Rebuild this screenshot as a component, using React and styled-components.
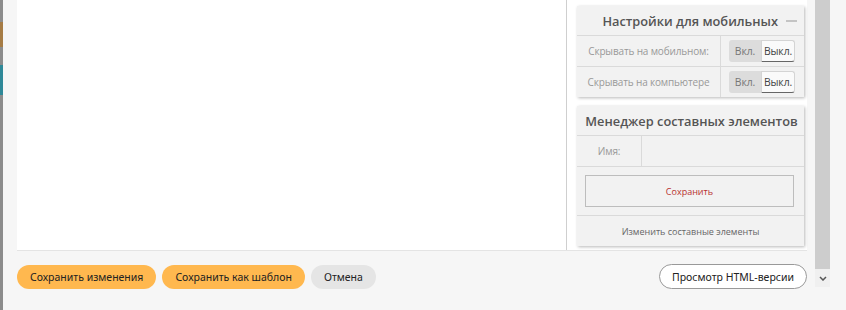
import React from 'react';
import styled, { createGlobalStyle } from 'styled-components';

const Global = createGlobalStyle`
  html, body { margin: 0; padding: 0; background: #f6f6f6; }
  body { font-family: "Open Sans", "Noto Sans", sans-serif; }
`;

const Page = styled.div`
  display: flex;
  width: 846px;
  height: 310px;
  overflow: hidden;
  background: #f6f6f6;
`;

const EdgeStrip = styled.div`
  width: 3px;
  flex: none;
  background: linear-gradient(
    to bottom,
    #8c8c8c 0 22px,
    #a67c45 22px 47px,
    #8c8c8c 47px 65px,
    #2f8898 65px 95px,
    #8c8c8c 95px
  );
`;

const Content = styled.div`
  width: 790px;
  margin-left: 14px;
  margin-right: 8px;
  display: flex;
  flex-direction: column;
`;

const Editor = styled.div`
  height: 250px;
  display: flex;
  background: #fff;
  border-bottom: 1px solid #e4e4e4;
`;

const Canvas = styled.div`
  width: 549px;
  border-right: 1px solid #cfcfcf;
`;

const Sidebar = styled.div`
  flex: 1;
  padding: 6px 3px 0 10px;
  display: flex;
  flex-direction: column;
  gap: 9px;
`;

const Panel = styled.section`
  background: #f2f2f2;
  box-shadow: 1px 1px 3px rgba(0, 0, 0, 0.28);
`;

const PanelHeader = styled.h3`
  margin: 0;
  height: 29px;
  display: flex;
  align-items: center;
  justify-content: ${p => (p.$align === 'right' ? 'flex-end' : 'center')};
  gap: 8px;
  padding: ${p => (p.$align === 'right' ? '0 7px 0 0' : '0 0 0 2px')};
  border-bottom: 1px solid #dadada;
  font-size: 12.8px;
  font-weight: 600;
  color: #555;
  white-space: nowrap;
`;

const Collapse = styled.span`
  display: inline-block;
  width: 11px;
  height: 2px;
  background: #c4c4c4;
`;

const Row = styled.div`
  display: flex;
  height: 30px;
  border-bottom: ${p => (p.$last ? 'none' : '1px solid #dadada')};
`;

const LabelCell = styled.div`
  width: ${p => p.$w}px;
  flex: none;
  border-right: 1px solid #dadada;
  display: flex;
  align-items: center;
  justify-content: center;
  font-size: 10px;
  letter-spacing: -0.15px;
  color: #999;
`;

const ToggleCell = styled.div`
  flex: 1;
  display: flex;
  align-items: center;
  padding-left: 8px;
`;

const ToggleOpt = styled.span`
  height: 22px;
  box-sizing: border-box;
  display: flex;
  align-items: center;
  justify-content: center;
  font-size: 10.4px;
  letter-spacing: -0.1px;
  color: ${p => (p.$active ? '#444' : '#777')};
  width: ${p => (p.$active ? 34 : 32)}px;
  background: ${p => (p.$active ? '#fafafa' : '#dcdcdc')};
  border: ${p => (p.$active ? '1px solid #d4d4d4' : 'none')};
  border-bottom: ${p => (p.$active ? '1px solid #666' : 'none')};
  border-radius: ${p => (p.$active ? '0 3px 3px 0' : '3px 0 0 3px')};
`;

const SaveArea = styled.div`
  padding: 8px 10px 8px 8px;
  border-bottom: 1px solid #dadada;
`;

const SaveButton = styled.button`
  display: block;
  width: 100%;
  height: 32px;
  background: #f2f2f2;
  border: 1px solid #bdbdbd;
  font-family: "Open Sans", sans-serif;
  font-size: 9px;
  color: #b8312f;
`;

const LinkRow = styled.div`
  height: 30px;
  display: flex;
  align-items: center;
  justify-content: center;
  font-size: 9px;
  color: #666;
`;

const Footer = styled.div`
  display: flex;
  align-items: center;
  gap: 6px;
  margin-top: 13px;
`;

const PillButton = styled.button`
  height: 24px;
  padding: 0 13px;
  border: none;
  border-radius: 12px;
  font-family: "Noto Sans", sans-serif;
  font-size: 10.5px;
  color: #222;
  background: ${p => (p.$variant === 'primary' ? '#ffb84f' : '#e5e5e5')};
  white-space: nowrap;
`;

const OutlineButton = styled.button`
  margin-left: auto;
  height: 25px;
  padding: 0 12px;
  border: 1px solid #999;
  border-radius: 13px;
  background: #fff;
  font-family: "Noto Sans", sans-serif;
  font-size: 10.5px;
  color: #222;
`;

const ScrollTrack = styled.div`
  width: 15px;
  flex: none;
  display: flex;
  flex-direction: column;
`;

const ScrollThumb = styled.div`
  height: 269px;
  background: #cdcdcd;
`;

const ScrollArrow = styled.div`
  height: 18px;
  background: #f0f0f0;
  display: flex;
  align-items: center;
  justify-content: center;
`;

const App = () => (
  <Page>
    <Global />
    <EdgeStrip />
    <Content>
      <Editor>
        <Canvas />
        <Sidebar>
          <Panel>
            <PanelHeader $align="right">
              Настройки для мобильных <Collapse />
            </PanelHeader>
            <Row>
              <LabelCell $w={143}>Скрывать на мобильном:</LabelCell>
              <ToggleCell>
                <ToggleOpt>Вкл.</ToggleOpt>
                <ToggleOpt $active>Выкл.</ToggleOpt>
              </ToggleCell>
            </Row>
            <Row $last>
              <LabelCell $w={143}>Скрывать на компьютере</LabelCell>
              <ToggleCell>
                <ToggleOpt>Вкл.</ToggleOpt>
                <ToggleOpt $active>Выкл.</ToggleOpt>
              </ToggleCell>
            </Row>
          </Panel>
          <Panel>
            <PanelHeader>Менеджер составных элементов</PanelHeader>
            <Row>
              <LabelCell $w={64}>Имя:</LabelCell>
            </Row>
            <SaveArea>
              <SaveButton>Сохранить</SaveButton>
            </SaveArea>
            <LinkRow>Изменить составные элементы</LinkRow>
          </Panel>
        </Sidebar>
      </Editor>
      <Footer>
        <PillButton $variant="primary">Сохранить изменения</PillButton>
        <PillButton $variant="primary">Сохранить как шаблон</PillButton>
        <PillButton>Отмена</PillButton>
        <OutlineButton>Просмотр HTML-версии</OutlineButton>
      </Footer>
    </Content>
    <ScrollTrack>
      <ScrollThumb />
      <ScrollArrow>
        <svg width="8" height="5" viewBox="0 0 8 5">
          <path d="M1 1l3 3 3-3" fill="none" stroke="#555" strokeWidth="1.5" />
        </svg>
      </ScrollArrow>
    </ScrollTrack>
  </Page>
);

export default App;
